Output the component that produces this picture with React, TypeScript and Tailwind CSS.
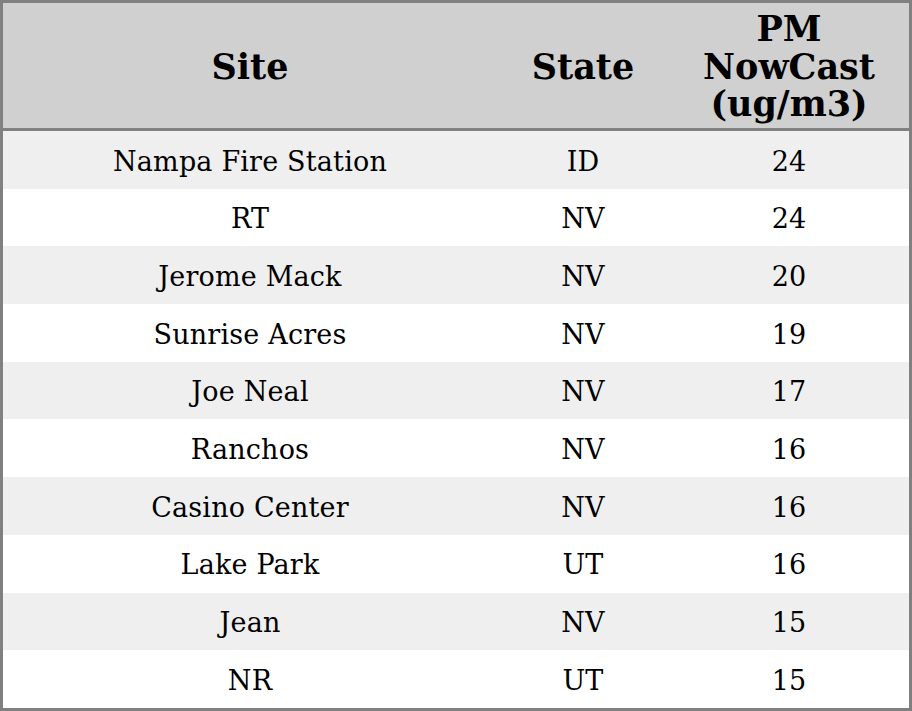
const ROWS = [
  { site: "Nampa Fire Station", state: "ID", pm: 24 },
  { site: "RT", state: "NV", pm: 24 },
  { site: "Jerome Mack", state: "NV", pm: 20 },
  { site: "Sunrise Acres", state: "NV", pm: 19 },
  { site: "Joe Neal", state: "NV", pm: 17 },
  { site: "Ranchos", state: "NV", pm: 16 },
  { site: "Casino Center", state: "NV", pm: 16 },
  { site: "Lake Park", state: "UT", pm: 16 },
  { site: "Jean", state: "NV", pm: 15 },
  { site: "NR", state: "UT", pm: 15 },
];

export default function App() {
  return (
    <div className="w-[912px] h-[711px] bg-white border-[3px] border-[#808080] text-black font-['DejaVu_Serif',serif]">
      {/* header */}
      <div className="grid grid-cols-[494px_172px_240px] h-[128px] pt-[2px] bg-[#d0d0d0] border-b-[3px] border-[#808080] font-bold text-[35px] leading-[37.5px] text-center items-center">
        <div>Site</div>
        <div>State</div>
        <div>
          PM
          <br />
          NowCast
          <br />
          (ug/m3)
        </div>
      </div>

      {/* body rows */}
      {ROWS.map((row, i) => (
        <div
          key={row.site}
          className={`grid grid-cols-[494px_172px_240px] h-[57.7px] pt-[4px] items-center text-center text-[27px] tracking-[0.18px] ${
            i % 2 === 0 ? "bg-[#efefef]" : "bg-white"
          }`}
        >
          <div>{row.site}</div>
          <div>{row.state}</div>
          <div>{row.pm}</div>
        </div>
      ))}
    </div>
  );
}
